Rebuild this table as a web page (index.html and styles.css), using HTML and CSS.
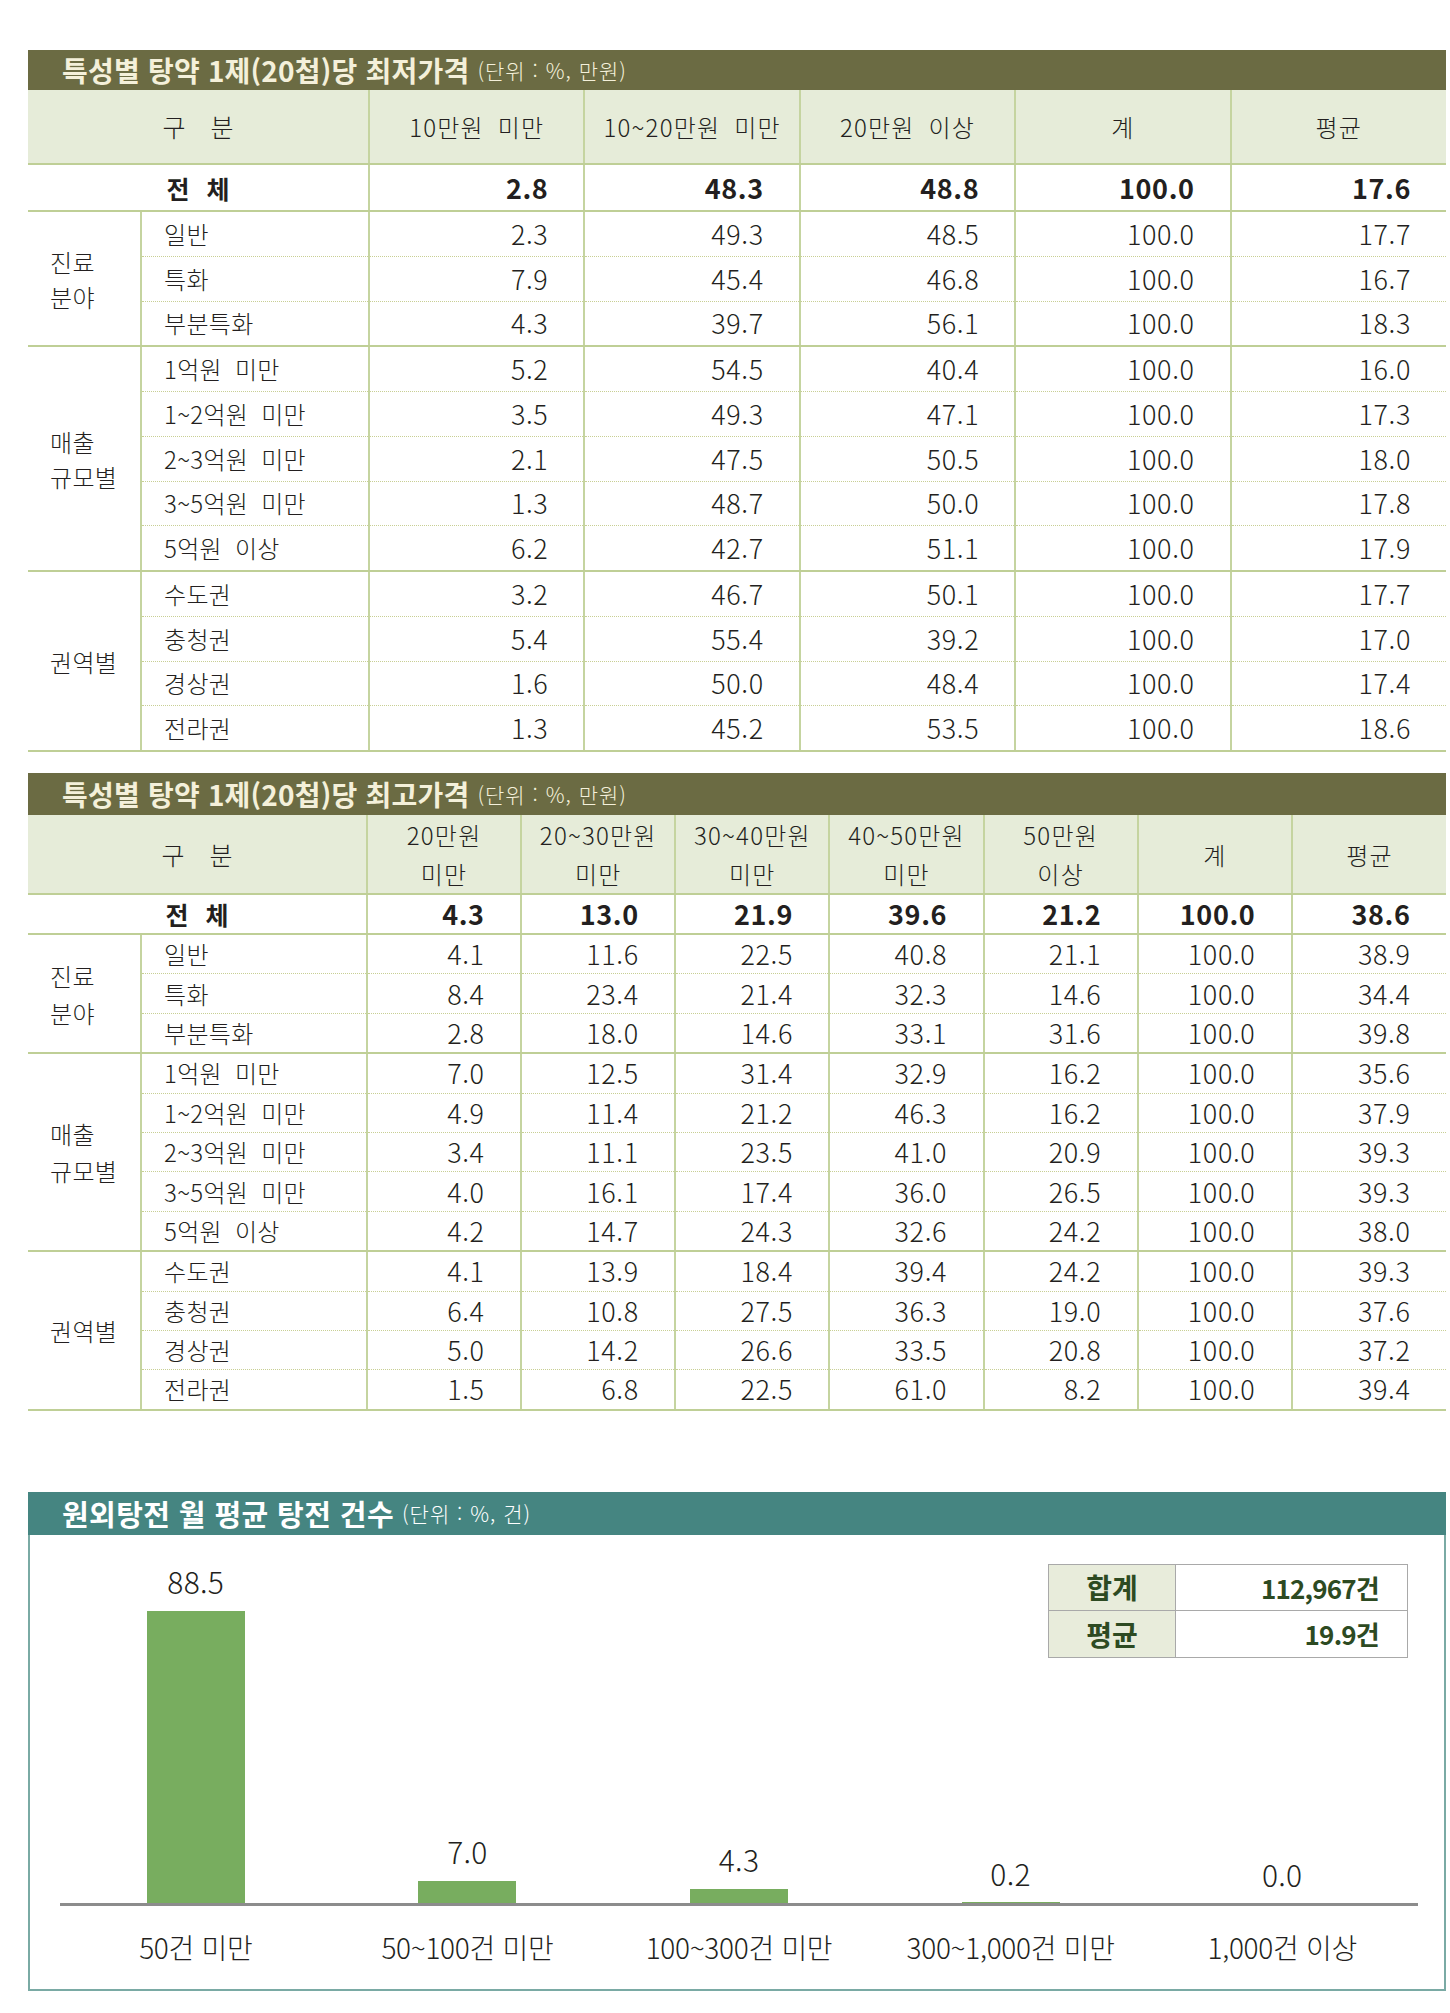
FILE: index.html
```html
<!DOCTYPE html>
<html lang="ko">
<head>
<meta charset="utf-8">
<title>탕약 가격 및 탕전 건수</title>
<link rel="stylesheet" href="styles.css">
</head>
<body>
<div class="page">

  <section class="block block-min">
    <div class="bar olive"><span class="ttl">특성별 탕약 1제(20첩)당 최저가격</span><span class="unit">(단위 : %, 만원)</span></div>
    <table class="tbl t1">
      <colgroup><col class="c-grp"><col class="c-item1"><col><col><col><col><col></colgroup>
      <thead>
        <tr><th colspan="2" class="gubun">구 분</th><th>10만원 미만</th><th>10~20만원 미만</th><th>20만원 이상</th><th>계</th><th>평균</th></tr>
      </thead>
      <tbody>
        <tr class="total"><td colspan="2" class="tlabel">전 체</td><td>2.8</td><td>48.3</td><td>48.8</td><td>100.0</td><td>17.6</td></tr>
        <tr><td rowspan="3" class="grp">진료<br>분야</td><td class="item">일반</td><td>2.3</td><td>49.3</td><td>48.5</td><td>100.0</td><td>17.7</td></tr>
        <tr><td class="item">특화</td><td>7.9</td><td>45.4</td><td>46.8</td><td>100.0</td><td>16.7</td></tr>
        <tr class="last"><td class="item">부분특화</td><td>4.3</td><td>39.7</td><td>56.1</td><td>100.0</td><td>18.3</td></tr>
        <tr><td rowspan="5" class="grp">매출<br>규모별</td><td class="item">1억원 미만</td><td>5.2</td><td>54.5</td><td>40.4</td><td>100.0</td><td>16.0</td></tr>
        <tr><td class="item">1~2억원 미만</td><td>3.5</td><td>49.3</td><td>47.1</td><td>100.0</td><td>17.3</td></tr>
        <tr><td class="item">2~3억원 미만</td><td>2.1</td><td>47.5</td><td>50.5</td><td>100.0</td><td>18.0</td></tr>
        <tr><td class="item">3~5억원 미만</td><td>1.3</td><td>48.7</td><td>50.0</td><td>100.0</td><td>17.8</td></tr>
        <tr class="last"><td class="item">5억원 이상</td><td>6.2</td><td>42.7</td><td>51.1</td><td>100.0</td><td>17.9</td></tr>
        <tr><td rowspan="4" class="grp">권역별</td><td class="item">수도권</td><td>3.2</td><td>46.7</td><td>50.1</td><td>100.0</td><td>17.7</td></tr>
        <tr><td class="item">충청권</td><td>5.4</td><td>55.4</td><td>39.2</td><td>100.0</td><td>17.0</td></tr>
        <tr><td class="item">경상권</td><td>1.6</td><td>50.0</td><td>48.4</td><td>100.0</td><td>17.4</td></tr>
        <tr class="last"><td class="item">전라권</td><td>1.3</td><td>45.2</td><td>53.5</td><td>100.0</td><td>18.6</td></tr>
      </tbody>
    </table>
  </section>

  <section class="block block-max">
    <div class="bar olive"><span class="ttl">특성별 탕약 1제(20첩)당 최고가격</span><span class="unit">(단위 : %, 만원)</span></div>
    <table class="tbl t2">
      <colgroup><col class="c-grp"><col class="c-item2"><col><col><col><col><col><col><col></colgroup>
      <thead>
        <tr><th colspan="2" class="gubun">구 분</th><th>20만원<br>미만</th><th>20~30만원<br>미만</th><th>30~40만원<br>미만</th><th>40~50만원<br>미만</th><th>50만원<br>이상</th><th>계</th><th>평균</th></tr>
      </thead>
      <tbody>
        <tr class="total"><td colspan="2" class="tlabel">전 체</td><td>4.3</td><td>13.0</td><td>21.9</td><td>39.6</td><td>21.2</td><td>100.0</td><td>38.6</td></tr>
        <tr><td rowspan="3" class="grp">진료<br>분야</td><td class="item">일반</td><td>4.1</td><td>11.6</td><td>22.5</td><td>40.8</td><td>21.1</td><td>100.0</td><td>38.9</td></tr>
        <tr><td class="item">특화</td><td>8.4</td><td>23.4</td><td>21.4</td><td>32.3</td><td>14.6</td><td>100.0</td><td>34.4</td></tr>
        <tr class="last"><td class="item">부분특화</td><td>2.8</td><td>18.0</td><td>14.6</td><td>33.1</td><td>31.6</td><td>100.0</td><td>39.8</td></tr>
        <tr><td rowspan="5" class="grp">매출<br>규모별</td><td class="item">1억원 미만</td><td>7.0</td><td>12.5</td><td>31.4</td><td>32.9</td><td>16.2</td><td>100.0</td><td>35.6</td></tr>
        <tr><td class="item">1~2억원 미만</td><td>4.9</td><td>11.4</td><td>21.2</td><td>46.3</td><td>16.2</td><td>100.0</td><td>37.9</td></tr>
        <tr><td class="item">2~3억원 미만</td><td>3.4</td><td>11.1</td><td>23.5</td><td>41.0</td><td>20.9</td><td>100.0</td><td>39.3</td></tr>
        <tr><td class="item">3~5억원 미만</td><td>4.0</td><td>16.1</td><td>17.4</td><td>36.0</td><td>26.5</td><td>100.0</td><td>39.3</td></tr>
        <tr class="last"><td class="item">5억원 이상</td><td>4.2</td><td>14.7</td><td>24.3</td><td>32.6</td><td>24.2</td><td>100.0</td><td>38.0</td></tr>
        <tr><td rowspan="4" class="grp">권역별</td><td class="item">수도권</td><td>4.1</td><td>13.9</td><td>18.4</td><td>39.4</td><td>24.2</td><td>100.0</td><td>39.3</td></tr>
        <tr><td class="item">충청권</td><td>6.4</td><td>10.8</td><td>27.5</td><td>36.3</td><td>19.0</td><td>100.0</td><td>37.6</td></tr>
        <tr><td class="item">경상권</td><td>5.0</td><td>14.2</td><td>26.6</td><td>33.5</td><td>20.8</td><td>100.0</td><td>37.2</td></tr>
        <tr class="last"><td class="item">전라권</td><td>1.5</td><td>6.8</td><td>22.5</td><td>61.0</td><td>8.2</td><td>100.0</td><td>39.4</td></tr>
      </tbody>
    </table>
  </section>

  <section class="block block-chart">
    <div class="bar teal"><span class="ttl">원외탕전 월 평균 탕전 건수</span><span class="unit">(단위 : %, 건)</span></div>
    <div class="chart-box">
      <div class="plot">
        <div class="pcol"><span class="val">88.5</span><div class="barv" style="height:292px"></div></div>
        <div class="pcol"><span class="val">7.0</span><div class="barv" style="height:22px"></div></div>
        <div class="pcol"><span class="val">4.3</span><div class="barv" style="height:14px"></div></div>
        <div class="pcol"><span class="val low">0.2</span><div class="barv" style="height:1px"></div></div>
        <div class="pcol"><span class="val low">0.0</span><div class="barv" style="height:0px"></div></div>
      </div>
      <div class="cats">
        <span>50건 미만</span>
        <span>50~100건 미만</span>
        <span>100~300건 미만</span>
        <span>300~1,000건 미만</span>
        <span>1,000건 이상</span>
      </div>
      <table class="summary">
        <tr><th>합계</th><td>112,967건</td></tr>
        <tr><th>평균</th><td>19.9건</td></tr>
      </table>
    </div>
  </section>

</div>
</body>
</html>
```

FILE: styles.css
```css
html, body {
  margin: 0;
  padding: 0;
  background: #ffffff;
}
body {
  font-family: "Noto Sans CJK KR", "Noto Sans", sans-serif;
  color: #231f20;
}
.page {
  width: 1418px;
  padding: 50px 4px 0 28px;
}

/* title bars */
.bar {
  display: flex;
  align-items: center;
  height: 40px;
  padding-left: 34px;
  color: #f4f0da;
  white-space: nowrap;
}
.bar.olive { background: #6b6b43; }
.bar.teal { background: #458581; color: #ffffff; height: 43px; }
.bar .ttl {
  font-size: 28px;
  font-weight: 700;
  letter-spacing: 0.2px;
}
.bar.teal .ttl { font-size: 29px; letter-spacing: 0.4px; }
.bar .unit {
  font-size: 21px;
  font-weight: 300;
  margin-left: 8px;
  letter-spacing: 1px;
}

/* tables */
.block-max { margin-top: 21px; }
.block-max .bar { height: 42px; }
.block-chart { margin-top: 81px; }

.tbl {
  width: 1418px;
  border-collapse: collapse;
  table-layout: fixed;
}
.tbl col.c-grp { width: 113px; }
.tbl col.c-item1 { width: 228px; }
.tbl col.c-item2 { width: 226px; }

.tbl th, .tbl td {
  padding: 0;
  border-left: 2px solid #c5d4a0;
  border-bottom: 1px dotted #c8cf94;
  white-space: nowrap;
}
.tbl th:first-child, .tbl td.grp, .tbl tr.total td:first-child {
  border-left: none;
}
.tbl td.item { border-left: 2px solid #c5d4a0; }

.tbl thead th {
  background: #e6ecd9;
  font-weight: 300;
  font-size: 24px;
  letter-spacing: 1.2px;
  word-spacing: 6px;
  text-align: center;
  border-bottom: 2px solid #bfcf96;
  line-height: 39px;
}
.tbl thead th.gubun { letter-spacing: 0; word-spacing: 18px; font-size: 25px; }
.t1 thead th { height: 73px; }
.t2 thead th { height: 78px; }

.tbl td {
  text-align: right;
  font-family: "Noto Sans CJK KR", sans-serif;
  font-size: 27px;
  font-weight: 300;
  line-height: 30px;
  letter-spacing: 0.6px;
  padding-right: 35px;
}
.t2 td { padding-right: 35.5px; }
.tbl td.item, .tbl td.grp {
  text-align: left;
  font-size: 24px;
  letter-spacing: 0.3px;
  word-spacing: 6px;
  padding: 0 0 0 22px;
}
.tbl td.grp {
  border-bottom: 2px solid #bfcf96;
  line-height: 35px;
  vertical-align: middle;
}
.t2 td.grp { line-height: 37px; }

.tbl tr.total td {
  font-weight: 700;
  border-bottom: 2px solid #bfcf96;
}
.tbl td.tlabel {
  font-weight: 700;
  text-align: center;
  font-size: 25px;
  letter-spacing: 0;
  word-spacing: 10px;
  padding: 0;
}
.tbl tr.last td { border-bottom: 2px solid #bfcf96; }

.t1 tr.total td { height: 45px; }
.t1 tbody tr td { height: 43.75px; }
.t2 tr.total td { height: 38px; }
.t2 tbody tr td { height: 38.4px; }

/* chart */
.chart-box {
  position: relative;
  border: 2px solid #7aaaa4;
  border-top: none;
  padding: 0 26px 0 30px;
}
.plot {
  height: 368px;
  display: grid;
  grid-template-columns: repeat(5, 1fr);
  align-items: end;
  border-bottom: 3px solid #8c8c8c;
}
.pcol {
  display: flex;
  flex-direction: column;
  align-items: center;
  justify-content: flex-end;
}
.val {
  font-size: 30px;
  font-weight: 300;
  line-height: 34px;
  letter-spacing: 0.3px;
  margin-bottom: 13px;
}
.val.low { margin-bottom: 12px; }
.barv {
  width: 98px;
  background: #78ad5f;
}
.cats {
  display: grid;
  grid-template-columns: repeat(5, 1fr);
  height: 83px;
  padding-top: 24px;
  box-sizing: border-box;
}
.cats span {
  text-align: center;
  font-size: 28px;
  font-weight: 300;
  line-height: 34px;
  letter-spacing: -0.3px;
  white-space: nowrap;
}

.summary {
  position: absolute;
  left: 1018px;
  top: 29px;
  width: 360px;
  border-collapse: collapse;
  table-layout: fixed;
  color: #2d4a22;
}
.summary th, .summary td {
  border: 1px solid #a9a9a9;
  font-size: 26px;
  font-weight: 700;
  padding: 0;
  letter-spacing: -0.8px;
}
.summary th {
  width: 126px;
  background: #e8ecdb;
  text-align: center;
  font-size: 28px;
  letter-spacing: 0;
}
.summary td {
  text-align: right;
  padding-right: 28px;
  background: #ffffff;
}
.summary tr:first-child th, .summary tr:first-child td { height: 45px; }
.summary tr:last-child th, .summary tr:last-child td { height: 46px; }
```
